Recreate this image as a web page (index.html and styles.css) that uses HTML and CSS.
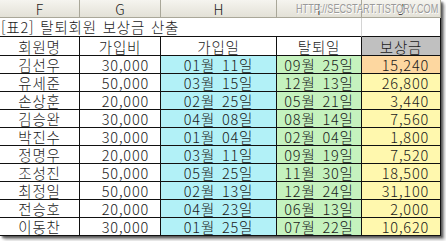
FILE: index.html
```html
<!DOCTYPE html>
<html lang="ko">
<head>
<meta charset="utf-8">
<link rel="stylesheet" href="styles.css">
</head>
<body>
<div class="sheet">
  <div class="grid">
    <div class="ch">F</div><div class="ch">G</div><div class="ch">H</div><div class="ch">I</div><div class="ch last">J</div>

    <div class="title">[표2] 탈퇴회원 보상금 산출</div><div class="blank"></div>

    <div class="c th">회원명</div><div class="c th">가입비</div><div class="c th">가입일</div><div class="c th">탈퇴일</div><div class="c th gray">보상금</div>

    <div class="c">김선우</div><div class="c r">30,000</div><div class="c cy">01월 11일</div><div class="c gr">09월 25일</div><div class="c r or">15,240</div>
    <div class="c">유세준</div><div class="c r">50,000</div><div class="c cy">03월 15일</div><div class="c gr">12월 13일</div><div class="c r ye">26,800</div>
    <div class="c">손상훈</div><div class="c r">20,000</div><div class="c cy">02월 25일</div><div class="c gr">05월 21일</div><div class="c r ye">3,440</div>
    <div class="c">김승완</div><div class="c r">30,000</div><div class="c cy">04월 08일</div><div class="c gr">08월 14일</div><div class="c r ye">7,560</div>
    <div class="c">박진수</div><div class="c r">30,000</div><div class="c cy">01월 04일</div><div class="c gr">02월 04일</div><div class="c r ye">1,800</div>
    <div class="c">정명우</div><div class="c r">20,000</div><div class="c cy">03월 11일</div><div class="c gr">09월 19일</div><div class="c r ye">7,520</div>
    <div class="c">조성진</div><div class="c r">50,000</div><div class="c cy">05월 25일</div><div class="c gr">11월 30일</div><div class="c r ye">18,500</div>
    <div class="c">최정일</div><div class="c r">50,000</div><div class="c cy">02월 13일</div><div class="c gr">12월 24일</div><div class="c r ye">31,100</div>
    <div class="c">전승호</div><div class="c r">20,000</div><div class="c cy">04월 23일</div><div class="c gr">06월 13일</div><div class="c r ye">2,000</div>
    <div class="c">이동찬</div><div class="c r">30,000</div><div class="c cy">01월 25일</div><div class="c gr">07월 22일</div><div class="c r ye">10,620</div>
  </div>
  <div class="mark">HTTP://SECSTART.TISTORY.COM</div>
</div>
</body>
</html>
```
FILE: styles.css
```css
html, body {
  margin: 0;
  padding: 0;
  background: #ffffff;
}
body {
  width: 446px;
  height: 241px;
  overflow: hidden;
}
.sheet {
  position: relative;
  width: 441px;
  height: 236px;
  background: #ffffff;
  box-shadow: 2px 2px 2px rgba(0,0,0,0.55), 4px 4px 3px rgba(0,0,0,0.25);
  font-family: "Noto Sans CJK KR", "Noto Sans", sans-serif;
  font-weight: 300;
  font-size: 14.5px;
  letter-spacing: 0.8px;
  word-spacing: 2px;
  color: #1a1a1a;
}
.grid {
  display: grid;
  grid-template-columns: 80px 81px 116px 85px 79px;
  grid-template-rows: 18px 19px 19px repeat(10, 18px);
}
.ch {
  background: linear-gradient(#f5f4ef, #e3e1d7);
  border-right: 1px solid #a9a799;
  border-bottom: 1px solid #a9a799;
  display: flex;
  align-items: center;
  justify-content: center;
  font-size: 14px;
  letter-spacing: 0;
  line-height: 1;
  box-sizing: border-box;
}
.title {
  grid-column: 1 / 5;
  border-right: 1px solid #d4d4d4;
  border-bottom: 1px solid #111;
  padding-left: 1px;
  display: flex;
  align-items: flex-end;
  line-height: 1;
  padding-bottom: 2px;
  word-spacing: 1px;
  white-space: nowrap;
  box-sizing: border-box;
}
.blank {
  border-bottom: 1px solid #111;
  border-right: 1px solid #111;
  box-sizing: border-box;
}
.c {
  border-right: 1px solid #111;
  border-bottom: 1px solid #111;
  box-sizing: border-box;
  display: flex;
  align-items: flex-end;
  justify-content: center;
  line-height: 1;
  padding-bottom: 1px;
  white-space: pre;
}
.r {
  justify-content: flex-end;
  padding-right: 11px;
}
.cy { background: #b2f1f7; }
.gr { background: #c5f2be; }
.ye { background: #fff8ae; }
.or { background: #fdd7a0; }
.gray { background: #c0c0c0; }
.mark {
  position: absolute;
  left: 296px;
  top: 1px;
  font-family: "Liberation Sans", Arial, sans-serif;
  font-weight: 400;
  font-size: 13px;
  letter-spacing: 0;
  word-spacing: 0;
  color: #9a9a9a;
  text-shadow: 1px 1px 0 #ffffff;
  transform: scaleX(0.7);
  transform-origin: 0 0;
  white-space: nowrap;
}
```
